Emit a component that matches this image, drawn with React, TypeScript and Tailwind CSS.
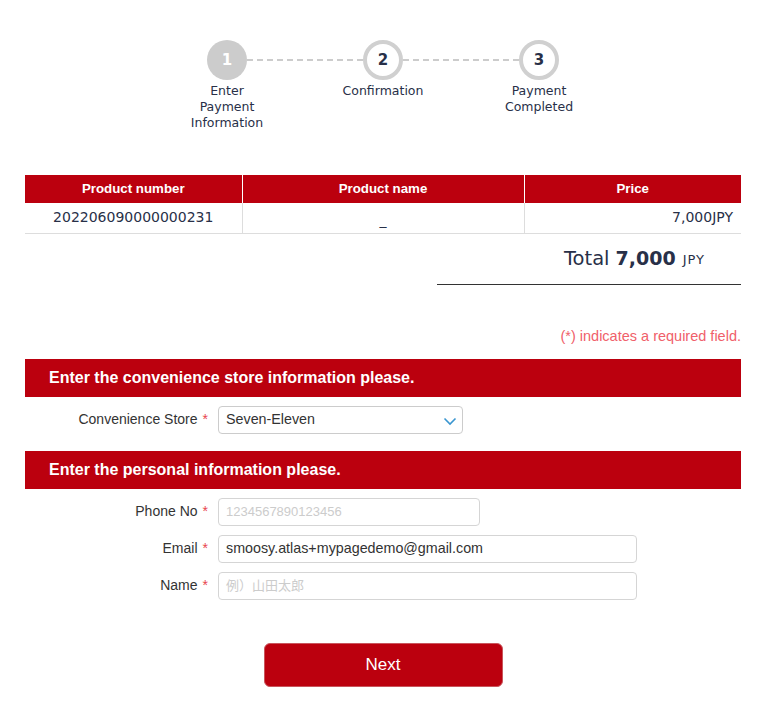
import React from "react";

const RED = "bg-[#bb000e]";

function Step({ n, active }: { n: number; active?: boolean }) {
  return active ? (
    <div className="w-10 h-10 rounded-full bg-[#cccccc] flex items-center justify-center text-white font-bold text-[15px] shrink-0">
      {n}
    </div>
  ) : (
    <div className="w-10 h-10 rounded-full border-[4px] border-[#d0d0d0] bg-white flex items-center justify-center text-[#283048] font-bold text-[15px] shrink-0">
      {n}
    </div>
  );
}

function Dash() {
  return <div className="w-[116px] border-t-2 border-dashed border-[#cccccc]" />;
}

function Label({ text }: { text: string }) {
  return (
    <div className="w-[193px] shrink-0 flex justify-end items-center pr-[10px] text-[14px] text-[#333333]">
      <span>{text}</span>
      <span className="text-[#e8454f] ml-[5px]">*</span>
    </div>
  );
}

export default function App() {
  return (
    <div
      className="w-[767px] min-h-[708px] bg-white pl-[25px] pr-[26px] pt-[40px] pb-[22px]"
      style={{ fontFamily: '"Liberation Sans", Arial, sans-serif' }}
    >
      {/* Steps */}
      <div className="flex flex-col items-center" style={{ fontFamily: '"DejaVu Sans", Verdana, sans-serif' }}>
        <div className="flex items-center">
          <Step n={1} active />
          <Dash />
          <Step n={2} />
          <Dash />
          <Step n={3} />
        </div>
        <div className="flex mt-[3px] text-[12.5px] leading-[16px] text-[#283048] text-center">
          <div className="w-[156px] flex justify-center"><div className="w-[84px]">Enter Payment Information</div></div>
          <div className="w-[156px] flex justify-center"><div className="w-[100px]">Confirmation</div></div>
          <div className="w-[156px] flex justify-center"><div className="w-[84px]">Payment Completed</div></div>
        </div>
      </div>

      {/* Table */}
      <table className="w-full mt-[44px] border-collapse">
        <thead>
          <tr className={`${RED} text-white text-[13.3px] font-bold h-[28px]`}>
            <th className="w-[217px] border-r border-white font-bold">Product number</th>
            <th className="w-[282px] border-r border-white font-bold">Product name</th>
            <th className="font-bold">Price</th>
          </tr>
        </thead>
        <tbody>
          <tr
            className="h-[30px] border-b border-[#dddddd] text-[14px] text-[#283048]"
            style={{ fontFamily: '"DejaVu Sans", Verdana, sans-serif' }}
          >
            <td className="text-center border-r border-[#dddddd]">202206090000000231</td>
            <td className="text-center border-r border-[#dddddd] pt-[6px]">_</td>
            <td className="text-right pr-[8px]">7,000JPY</td>
          </tr>
        </tbody>
      </table>

      {/* Total */}
      <div className="flex justify-end">
        <div
          className="w-[304px] h-[51px] border-b border-[#333333] flex items-center justify-end pr-[36px] text-[#283048]"
          style={{ fontFamily: '"DejaVu Sans", Verdana, sans-serif' }}
        >
          <span className="text-[19.5px]">Total</span>
          <span className="text-[19px] font-bold ml-[6px]">7,000</span>
          <span className="text-[13px] tracking-[1px] ml-[7px] mt-[3px]">JPY</span>
        </div>
      </div>

      <div className="text-right text-[14.5px] text-[#f0606a] mt-[43px] leading-[16px]">(*) indicates a required field.</div>

      {/* Section 1 */}
      <div className={`${RED} h-[38px] mt-[15px] flex items-center pl-[24px] text-white font-bold text-[16px]`}>
        Enter the convenience store information please.
      </div>
      <div className="flex mt-[9px] h-[28px]">
        <Label text="Convenience Store" />
        <div className="w-[245px] h-[28px] border border-[#cccccc] rounded-[4px] flex items-center justify-between pl-[7px] pr-[5px] text-[14.3px] text-[#333333]">
          <span>Seven-Eleven</span>
          <svg width="14" height="10" viewBox="0 0 14 10" fill="none" className="mt-[3px]">
            <path d="M1.5 2.5 L7 8 L12.5 2.5" stroke="#3a96d0" strokeWidth="1.6" />
          </svg>
        </div>
      </div>

      {/* Section 2 */}
      <div className={`${RED} h-[38px] mt-[17px] flex items-center pl-[24px] text-white font-bold text-[16px]`}>
        Enter the personal information please.
      </div>
      <div className="flex flex-col gap-[9px] mt-[9px]">
        <div className="flex h-[28px]">
          <Label text="Phone No" />
          <div className="w-[262px] h-[28px] border border-[#d5d5d5] rounded-[4px] flex items-center pl-[7px] text-[13px] text-[#cccccc]">
            1234567890123456
          </div>
        </div>
        <div className="flex h-[28px]">
          <Label text="Email" />
          <div className="w-[419px] h-[28px] border border-[#d5d5d5] rounded-[4px] flex items-center pl-[7px] text-[14.3px] text-[#333333]">
            smoosy.atlas+mypagedemo@gmail.com
          </div>
        </div>
        <div className="flex h-[28px]">
          <Label text="Name" />
          <div
            className="w-[419px] h-[28px] border border-[#d5d5d5] rounded-[4px] flex items-center pl-[7px] text-[13px] text-[#cccccc]"
            style={{ fontFamily: '"Liberation Sans", "Noto Sans CJK JP", sans-serif' }}
          >
            例）山田太郎
          </div>
        </div>
      </div>

      <div className="flex justify-center mt-[43px]">
        <button className="w-[239px] h-[44px] rounded-[6px] bg-[#bb000e] border border-[#c9555c] text-white text-[17px]">
          Next
        </button>
      </div>
    </div>
  );
}
